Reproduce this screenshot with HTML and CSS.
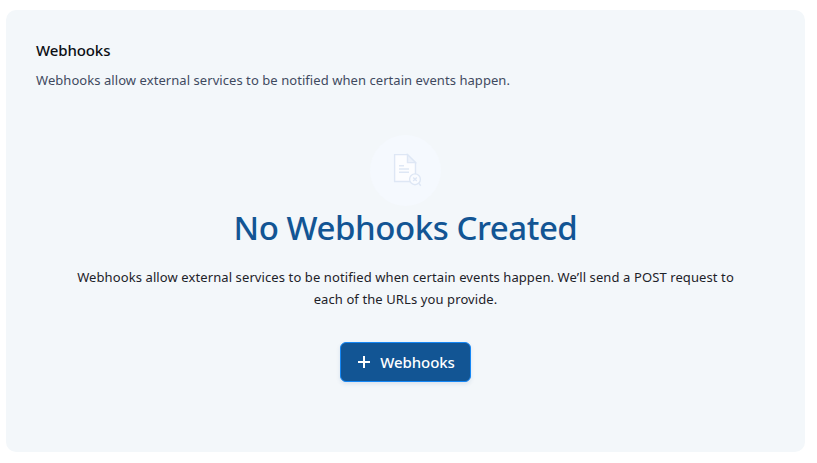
FILE: index.html
```html
<!DOCTYPE html>
<html lang="en">
<head>
<meta charset="utf-8">
<title>Webhooks</title>
<link rel="stylesheet" href="styles.css">
</head>
<body>
<main class="card">
  <header class="head">
    <h1 class="title"><span>Webhooks</span></h1>
    <p class="subtitle"><span>Webhooks allow external services to be notified when certain events happen.</span></p>
  </header>
  <section class="empty">
    <div class="badge">
      <svg width="71" height="71" viewBox="0 0 71 71" fill="none" stroke="#dee7f5">
        <path d="M24.6 19.6H37.5L45.5 27.6V46.5H24.6Z" fill="#fcfdff" stroke-width="1.4"/>
        <path d="M37.5 19.6V27.6H45.5Z" fill="#edf2fb" stroke-width="1.4"/>
        <path d="M29 30.8H34M29 34H39M29 37.3H39" stroke-width="1.4"/>
        <circle cx="45" cy="44.3" r="5.4" fill="#fafcff" stroke-width="1.4"/>
        <path d="M43.2 42.5L46.8 46.1M46.8 42.5L43.2 46.1M48.8 48.3L50.8 50.8" stroke-width="1.4"/>
      </svg>
    </div>
    <h2 class="heading"><span>No Webhooks Created</span></h2>
    <p class="text"><span class="line1">Webhooks allow external services to be notified when certain events happen. We’ll send a POST request to</span><br><span class="line2">each of the URLs you provide.</span></p>
    <button class="button" type="button">
      <svg width="12" height="12" viewBox="0 0 12 12" stroke="#fff" stroke-width="2"><path d="M0 6H12M6 0V12"/></svg>
      <span>Webhooks</span>
    </button>
  </section>
</main>
</body>
</html>
```
FILE: styles.css
```css
* { box-sizing: border-box; }
body {
  margin: 0;
  background: #fff;
  font-family: "Segoe UI", "Noto Sans", "Open Sans", sans-serif;
}
h1, h2, p { margin: 0; white-space: nowrap; }
.card {
  width: 799px;
  height: 442px;
  margin: 10px 0 0 6px;
  padding: 29px 30px;
  border-radius: 10px;
  background: #f3f7fa;
}
.title {
  font-size: 15px;
  font-weight: 500;
  line-height: 22px;
  letter-spacing: -.1px;
  color: #0c0f14;
}
.subtitle {
  margin-top: 8px;
  font-size: 13px;
  line-height: 22px;
  letter-spacing: .06px;
  color: #3f4a5f;
}
.empty {
  display: flex;
  flex-direction: column;
  align-items: center;
  margin-top: 44px;
}
.badge {
  width: 71px;
  height: 71px;
  border-radius: 50%;
  background: #f5f9fe;
}
.badge svg { display: block; }
.heading {
  font-size: 33px;
  font-weight: 500;
  line-height: 44px;
  letter-spacing: -.45px;
  color: #125594;
}
.text {
  margin-top: 16px;
  font-size: 13px;
  line-height: 22px;
  letter-spacing: .1px;
  text-align: center;
  color: #1d2229;
}
.button {
  display: flex;
  align-items: center;
  justify-content: center;
  gap: 10px;
  width: 131px;
  height: 40px;
  margin-top: 32px;
  padding: 0 0 0 2px;
  border: 1px solid #1587f5;
  border-radius: 6px;
  background: #125594;
  box-shadow: 0 2px 4px rgba(30, 80, 150, .12);
  font: 500 15px/22px "Segoe UI", "Noto Sans", "Open Sans", sans-serif;
  letter-spacing: -.05px;
  color: #fff;
  white-space: nowrap;
}
```
